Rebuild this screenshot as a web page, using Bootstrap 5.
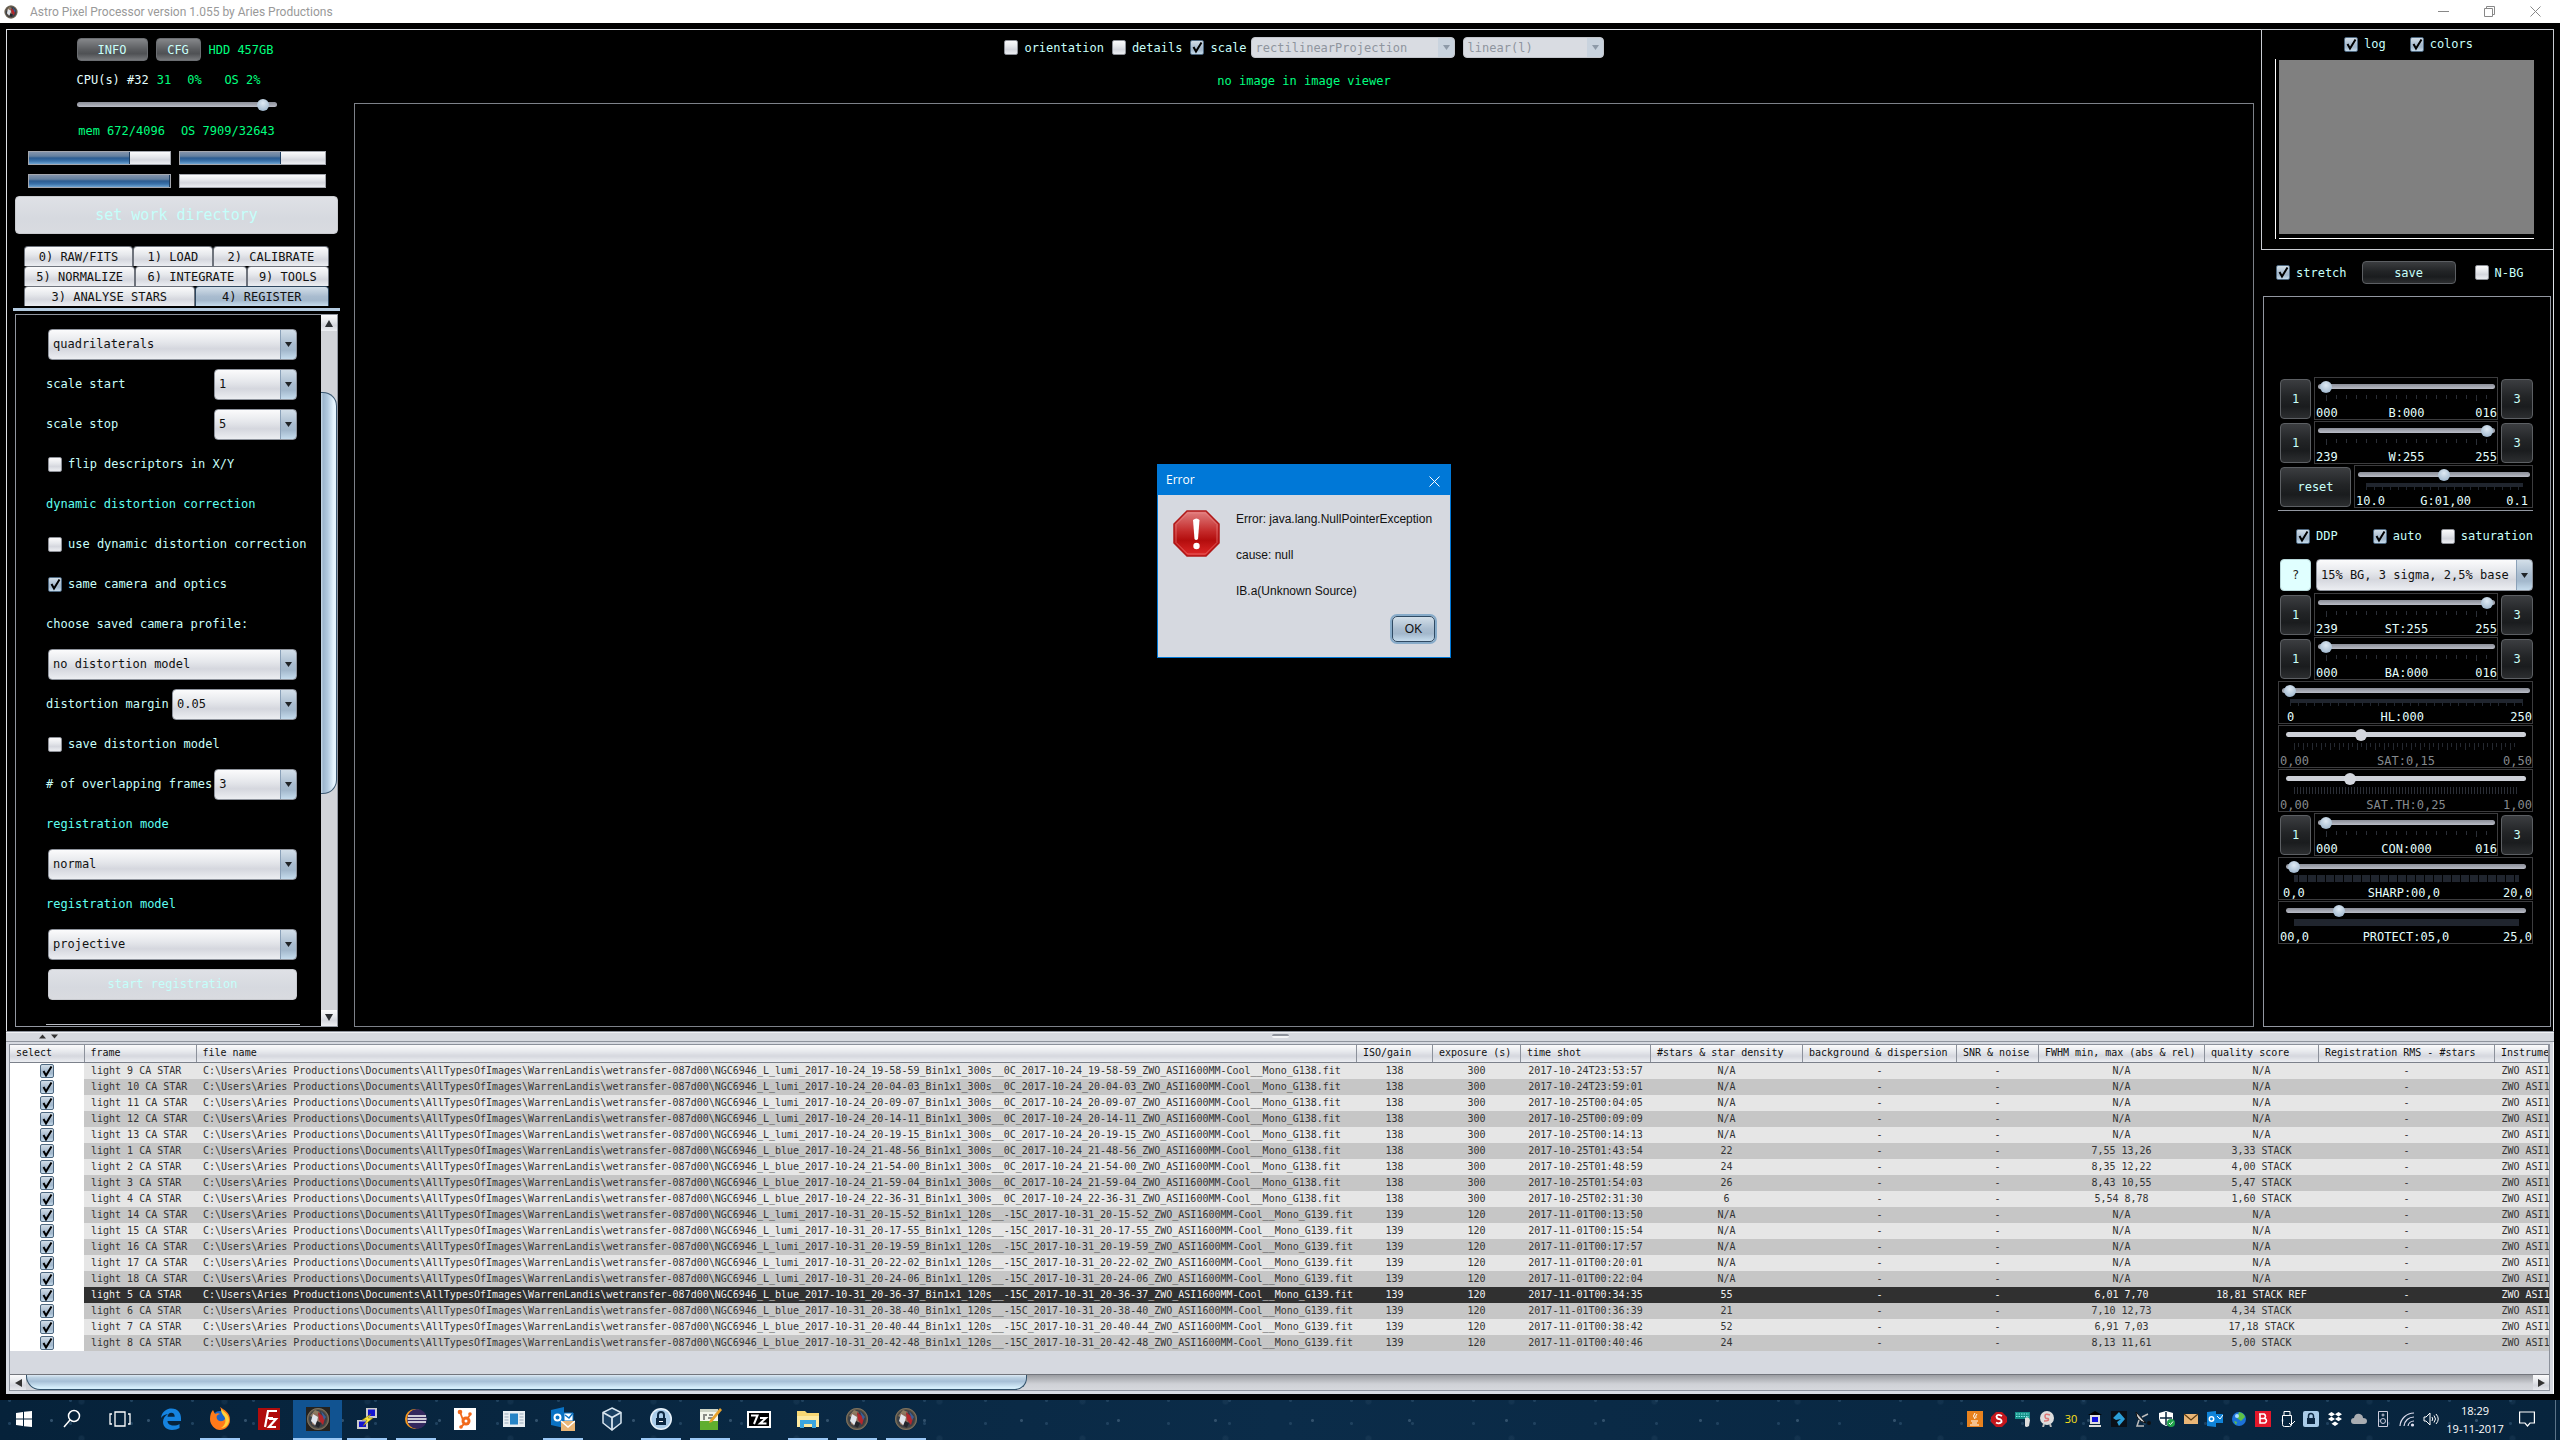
<!DOCTYPE html>
<html lang="en">
<head>
<meta charset="utf-8">
<meta name="viewport" content="width=device-width, initial-scale=1">
<title>Astro Pixel Processor</title>
<link rel="stylesheet" href="https://cdn.jsdelivr.net/npm/bootstrap@5.3.0/dist/css/bootstrap.min.css">
<style>
:root{
  --silver:linear-gradient(#fbfbfc,#e6e8ec 40%,#d5d7de 65%,#eceef2);
  --steel:linear-gradient(#d3dfe9,#a9bccf 50%,#a3b8cc 70%,#c6dced);
  --pale:#c8fffa;
  --line:#9297a1;
}
html,body{height:100%}
body{background:#000;color:var(--pale);font:12px/16px "DejaVu Sans Mono",monospace;overflow:hidden}
button,select,input{font:inherit}
.ui-font{font-family:"Open Sans","Noto Sans",sans-serif}
.green-t{color:#00ff7f}
.cyan-t{color:#5ffff0}

/* window title */
.titlebar{height:23px;background:#fff;color:#999;font-family:Roboto,"Noto Sans",sans-serif;padding-right:2px}
.titlebar .cap{width:46px;height:23px;border:0;background:none;padding:0;color:#999;display:flex;align-items:center;justify-content:center}

.frame-top{margin:6px 6px 0;border:1px solid #dfe1e6;border-bottom:0;min-height:0}
.col-left{width:339px;padding:8px 8px 4px;min-height:0;flex:none}
.col-mid{padding:7px 0 4px 8px;min-width:0}
.col-right{width:299px;padding-left:7px;flex:none}

/* nimbus buttons */
.nb{border:1px solid #5c5f63;border-radius:4px;background:linear-gradient(#3b3d40,#222426 45%,#1a1c1e 70%,#2c2e30);color:var(--pale);padding:0;text-align:center}
.nb-grey{background:linear-gradient(#85878a,#5b5d60 50%,#4f5154 70%,#77797c);border-color:#6b6e72;height:23px}
.nb-off{background:linear-gradient(#dfe1e6,#d6d9df 60%,#d9dbe0);border-color:#c9cbd0;color:#c5fffb}
.nb-q{background:#e0ffff;border-color:#b8d8da;color:#222}

.ck{display:flex;align-items:center;white-space:nowrap}
.ck input,.tick{appearance:none;width:14px;height:15px;margin:0 6px 0 0;flex:none;border:1px solid #8d9097;border-radius:2px;background:var(--silver)}
.ck input:checked,.tick:checked{border-color:#4e6880;background:url("data:image/svg+xml,%3Csvg xmlns='http://www.w3.org/2000/svg' viewBox='0 0 12 13'%3E%3Cpath d='M2.5 6L5 10.5 10.5 1.5' fill='none' stroke='%23000' stroke-width='2'/%3E%3C/svg%3E") center/12px 13px no-repeat,var(--steel)}

.cb{appearance:none;height:31px;border:1px solid #8e939c;border-radius:4px;color:#111;padding:0 20px 0 4px;min-width:0;
  background:url("data:image/svg+xml,%3Csvg xmlns='http://www.w3.org/2000/svg' viewBox='0 0 7 5'%3E%3Cpath d='M0 0h7L3.500 5z' fill='%23202428'/%3E%3C/svg%3E") right 4px center/7px 5px no-repeat,
  linear-gradient(#8ba1b8,#8ba1b8) right 15px top/1px 100% no-repeat,
  var(--steel) right top/15px 100% no-repeat,var(--silver)}
.cb:disabled{opacity:1;height:21px;color:#8f959e;border-color:#c3c6cc;
  background:url("data:image/svg+xml,%3Csvg xmlns='http://www.w3.org/2000/svg' viewBox='0 0 7 5'%3E%3Cpath d='M0 0h7L3.500 5z' fill='%238e9aa8'/%3E%3C/svg%3E") right 4px center/7px 5px no-repeat,
  linear-gradient(#c9d3de,#c9d3de) right top/16px 100% no-repeat,#d9dce2}

input[type=range]{appearance:none;display:block;height:16px;background:none;padding:0;margin:0}
input[type=range]::-webkit-slider-runnable-track{height:5px;border-radius:3px;background:linear-gradient(#8a8d97,#b9bcc6)}
input[type=range]::-webkit-slider-thumb{appearance:none;width:16px;height:16px;margin-top:-5px;border:2px solid transparent;border-radius:50%;background:radial-gradient(circle at 50% 35%,#dfeaf4,#a9bfd3 70%,#5c7893) padding-box}
input[type=range]:disabled::-webkit-slider-runnable-track{background:#cdd0d7}
input[type=range]:disabled::-webkit-slider-thumb{background:#d3d6dd padding-box}

.status{width:200px}
.meters{margin-top:11px}
.bars{width:298px;display:grid;grid-template-columns:143px 1fr;gap:9px 8px;margin-top:12px}
.bars .progress{height:14px;border-radius:0;border:1px solid #a5a8af;background:var(--silver)}
.bars .progress-bar{background:linear-gradient(#8394ac,#64809f 35%,#2c5c91 50%,#3a72aa 75%,#6fa5d3);border-right:1px solid #1d3c5e}
.workdir{height:38px;font-size:15px}

/* tabs */
.tabs{width:305px}
.tabs button{flex:1 1 auto;height:20px;border:1px solid #6e737c;border-bottom:0;border-radius:4px 4px 0 0;background:var(--silver);color:#111;padding:0}
.tabs button.on{background:var(--steel);border-color:#2e475f}
.tab-rule{height:3px;background:#b4cbe0;margin:2px -2px 3px}

.scroll-pane{border:1px solid var(--line);min-height:0}
.form-rows{padding:9px 0 0 30px;width:284px}
.fr{height:40px;display:flex;align-items:center;justify-content:space-between;white-space:nowrap}
.fr .cb,.fr .nb{margin:0 3px 0 2px}
.fr .ck{margin-left:2px}
.fr .wide{width:100%;height:31px}
.w-s{width:83px}
.w-m{width:125px}
.rule{height:1px;background:#b9bcc4;margin-top:20px}

.sb{background:#d2d4d9}
.sb button{border:0;background:var(--silver);padding:0;width:16px;height:16px;display:flex;align-items:center;justify-content:center;flex:none}
.sb-v{width:16px}
.sb-v .knob{background:linear-gradient(90deg,#c9dae8,#9db6cd 15%,#b3cbe0 45%,#e6f5ff 85%);border:1px solid #3b5871;border-left:0;border-radius:0 14px 14px 0}
.sb-h{height:16px;border-top:1px solid #73767d;background:linear-gradient(#9a9ca1,#cfd1d6 60%,#d6d8dd)}
.sb-h .knob{background:linear-gradient(#dce9f3,#b9cfe1 20%,#a6bfd6 45%,#d6eefb 90%);border:1px solid #33536c;border-top:0;border-radius:0 0 12px 14px}
.g61{flex:61}.g403{flex:403}.g217{flex:217}.g998{flex:998}.g1505{flex:1505}

.note{margin-top:15px}
.viewer{border:1px solid #7d8189;margin-top:14px;padding-bottom:7px}

/* error dialog */
.dlg{width:294px;border:1px solid #0078d7;background:#d6d9e0;color:#111;font:12px/18px "Liberation Sans",Arial,sans-serif}
.dlg-head{height:30px;background:#0078d7;color:#fff;padding:0 4px 0 8px}
.dlg-head button{border:0;background:none;padding:0 6px;color:#fff}
.dlg-body{padding:15px}
.dlg-body p{margin:0 0 18px}
.dlg-body p:last-child{margin-bottom:16px}
.ok{width:43px;height:26px;border:1px solid #2f4a63;border-radius:5px;background:var(--steel);box-shadow:0 0 0 2px #87abc9;color:#111;padding:0}

/* right column */
.hist{border:1px solid #c9ccd2;margin-top:-1px;margin-right:-1px;padding:6px 19px 10px 13px;height:221px}
.hist-opts{margin:0 0 7px 8px}
.plot{border-left:1px solid #fff;padding:1px 0 3px 3px;height:180px}
.plot div{background:#808080;height:174px}
.axis{height:1px;background:#fff;margin:-1px 0 0 4px}
.actions{margin-top:11px;padding-left:15px;gap:15px}
.side{border:1px solid var(--line);margin:12px 2px 4px 2px;padding:80px 17px 0 14px}
.grp{height:43px;margin-bottom:1px;display:flex;gap:3px}
.grp .nb{height:40px;margin-top:2px;width:31px;flex:none}
.grp .nb:first-child{margin-left:2px}
.grp .nb:last-child{width:32px}
.grp .reset{width:71px!important}
.sl{flex:1;min-width:0;border:1px solid #3c3c3e}
.sl .in{margin:0 2px 0 3px}
.sl.pad .in{margin:0 6px 0 7px}
.sl input{width:100%}
.sl .tk{height:7px;margin:1px 7px 5px 8px}
.sl .cap3{display:flex;justify-content:space-between;line-height:12px;padding:0 0 0 1px;color:#e4fffd}
.sl.off .cap3{color:#85898d}
.tk-a{background:linear-gradient(90deg,#2a2e36 1px,transparent 1px) 0 0/10px 4px repeat-x,linear-gradient(90deg,#2a2e36 1px,transparent 1px) 0 0/150px 6px repeat-x}
.tk-b{background:linear-gradient(#20252e,#20252e) 0 0/100% 4px no-repeat,linear-gradient(90deg,#20252e 1px,transparent 1px) 0 0/8px 7px repeat-x}
.tk-c{background:linear-gradient(90deg,#24282f 1px,transparent 1px) 0 0/9px 7px repeat-x,linear-gradient(90deg,#24282f 1px,transparent 1px) 4px 0/9px 4px repeat-x}
.tk-d{background:linear-gradient(90deg,#2a2e36 1px,transparent 1px) 0 0/3px 7px repeat-x}
.tk-e{background:linear-gradient(90deg,#20252e 8px,transparent 8px) 5px 0/9px 7px repeat-x}
.tk-f{background:#20252e}
.thin{height:1px;background:#9297a1;margin:2px 0 17px}
.ddp{margin-left:18px}
.sl-pre{height:32px;margin:15px 0 2px;display:flex;gap:5px}

/* frames table */
.split{margin:0 6px;height:11px;background:#d6d9df;border:1px solid #8f949d;border-width:1px 0;padding:0 53px 0 33px;box-shadow:inset 0 1px #f0f1f4}
.grip{width:17px;height:4px;border-top:2px solid #8e939c;border-radius:2px;background:#f4f5f7}
.frames{margin:0 6px 6px;background:#d6d9e0;border-right:1px solid #fff;padding:2px 3px 3px 3px}
.frames-in{border:1px solid #8c919b;overflow:hidden}
.frames table{table-layout:fixed;width:100%;border-collapse:collapse;font-size:10px;line-height:16px;color:#333}
.frames th{height:18px;padding:0 0 0 6px;font-weight:400;color:#111;background:var(--silver);border-right:1px solid #8c919b;border-bottom:1px solid #7c818b;white-space:nowrap;overflow:hidden}
.frames td{height:16px;padding:0;text-align:center;white-space:nowrap;overflow:hidden;background:#e6e6e6}
.frames tr:nth-child(even) td{background:#c6c6c6}
.frames tr.cur td{background:#303030;color:#f2f2f2}
.frames tr td:first-child{background:#fff!important}
.frames td.l{text-align:left;padding-left:7px}
.frames .tick{display:block;margin:0 auto;height:14px}
.frames .void{height:23px}

/* taskbar */
.task{height:40px;background:
  radial-gradient(circle,#31506b 1px,transparent 2px) 3px 5px/97px 31px,
  radial-gradient(circle,#1f415e 1px,transparent 2px) 40px 12px/61px 23px,
  radial-gradient(circle,#28486450 2px,transparent 4px) 10px 20px/143px 37px,
  linear-gradient(90deg,#06223a,#0b2c49 50%,#07243d);color:#fff}
.task button{border:0;background:none;padding:0;width:49px;height:40px;border-bottom:2px solid transparent;display:flex;align-items:center;justify-content:center;flex:none}
.task .first3{margin-right:2px}
.task .first3 button{width:48px}
.task .run{background:linear-gradient(#9bc8f5,#9bc8f5) center bottom/40px 2px no-repeat;background-origin:border-box;background-clip:border-box}
.task .act{background:linear-gradient(#9bc8f5,#9bc8f5) center bottom/100% 2px no-repeat border-box,#115391 border-box}
.task svg{width:24px;height:24px}
.tray button{width:24px!important}
.tray svg{width:16px;height:16px}
.clock{width:64px;font-size:11px;line-height:18px}
.edge{width:1px;background:#5b7388;margin:0 4px 0 12px}
</style>
</head>
<body class="d-flex flex-column">

<svg width="0" height="0" class="position-absolute" aria-hidden="true">
  <defs>
    <symbol id="app" viewBox="0 0 24 24"><circle cx="12" cy="12" r="11" fill="#5b5346"/><circle cx="12" cy="12" r="9" fill="#3a4048"/><path d="M4 9l5-6 5 2-6 6z" fill="#8d7b60"/><path d="M6 6l6 1 3 6-2 8-7-4z" fill="#8a6d5a"/><path d="M7 7l5 3-2 9-5-5z" fill="#e0e4ea"/><path d="M12 5l7 6-2 7-4-5z" fill="#b3262c"/><path d="M15 4l5 6-2 3z" fill="#3b5f99"/><path d="M11 14l4 2-2 5-4-2z" fill="#23262c"/><circle cx="12" cy="12" r="10.500" fill="none" stroke="#7d7362"/></symbol>
    <symbol id="up" viewBox="0 0 8 7"><path d="M4 0l4 7H0z" fill="#2c2f33"/></symbol>
  </defs>
</svg>

<header class="titlebar d-flex align-items-center">
  <svg class="mx-1" width="14" height="14"><use href="#app"/></svg>
  <span class="ms-2">Astro Pixel Processor version 1.055 by Aries Productions</span>
  <div class="d-flex ms-auto">
    <button class="cap" aria-label="Minimize"><svg width="11" height="11"><path d="M0 5.500h11" stroke="#888"/></svg></button>
    <button class="cap" aria-label="Restore"><svg width="11" height="11" fill="none" stroke="#888"><path d="M.5 2.500h8v8h-8zM2.500 2.500v-2h8v8h-2"/></svg></button>
    <button class="cap" aria-label="Close"><svg width="11" height="11"><path d="M.5.5l10 10M10.500.5l-10 10" stroke="#888"/></svg></button>
  </div>
</header>

<main class="frame-top d-flex flex-grow-1">
  <section class="col-left d-flex flex-column">
    <div class="status mx-auto d-flex align-items-center">
      <button class="nb nb-grey" style="width:71px">INFO</button>
      <button class="nb nb-grey ms-2" style="width:45px">CFG</button>
      <span class="green-t ms-2 text-nowrap">HDD 457GB</span>
    </div>
    <div class="status meters mx-auto d-flex text-nowrap green-t">
      <label for="cpu" class="me-2" style="color:#e4fffd">CPU(s) #32</label><span class="me-3">31</span><span>0%</span><span class="ms-auto me-3">OS 2%</span>
    </div>
    <input id="cpu" type="range" class="status mx-auto mt-2" value="97">
    <div class="status meters mx-auto d-flex justify-content-center gap-3 green-t text-nowrap"><span>mem 672/4096</span><span>OS 7909/32643</span></div>
    <div class="bars mx-auto">
      <div class="progress" role="progressbar" aria-label="Heap memory"><div class="progress-bar" style="width:72%"></div></div>
      <div class="progress" role="progressbar" aria-label="System memory"><div class="progress-bar" style="width:70%"></div></div>
      <div class="progress" role="progressbar" aria-label="Task"><div class="progress-bar" style="width:100%"></div></div>
      <div class="progress" role="progressbar" aria-label="Total"></div>
    </div>
    <button class="nb nb-off workdir mt-2 w-100">set work directory</button>
    <nav class="tabs mx-auto pt-2 mt-1">
      <div class="d-flex"><button>0) RAW/FITS</button><button>1) LOAD</button><button>2) CALIBRATE</button></div>
      <div class="d-flex"><button>5) NORMALIZE</button><button>6) INTEGRATE</button><button>9) TOOLS</button></div>
      <div class="d-flex"><button>3) ANALYSE STARS</button><button class="on">4) REGISTER</button></div>
    </nav>
    <div class="tab-rule"></div>
    <div class="scroll-pane d-flex flex-grow-1 overflow-hidden">
      <div class="form-rows">
        <div class="fr"><select class="cb wide" aria-label="descriptor"><option>quadrilaterals</option></select></div>
        <div class="fr"><label for="s1">scale start</label><select id="s1" class="cb w-s"><option>1</option></select></div>
        <div class="fr"><label for="s2">scale stop</label><select id="s2" class="cb w-s"><option>5</option></select></div>
        <div class="fr"><label class="ck"><input type="checkbox">flip descriptors in X/Y</label></div>
        <div class="fr cyan-t">dynamic distortion correction</div>
        <div class="fr"><label class="ck"><input type="checkbox">use dynamic distortion correction</label></div>
        <div class="fr"><label class="ck"><input type="checkbox" checked>same camera and optics</label></div>
        <div class="fr"><label for="prof">choose saved camera profile:</label></div>
        <div class="fr"><select id="prof" class="cb wide"><option>no distortion model</option></select></div>
        <div class="fr"><label for="marg">distortion margin</label><select id="marg" class="cb w-m"><option>0.05</option></select></div>
        <div class="fr"><label class="ck"><input type="checkbox">save distortion model</label></div>
        <div class="fr"><label for="ovl"># of overlapping frames</label><select id="ovl" class="cb w-s"><option>3</option></select></div>
        <div class="fr cyan-t"><label for="mode">registration mode</label></div>
        <div class="fr"><select id="mode" class="cb wide"><option>normal</option></select></div>
        <div class="fr cyan-t"><label for="model">registration model</label></div>
        <div class="fr"><select id="model" class="cb wide"><option>projective</option></select></div>
        <div class="fr"><button class="nb nb-off wide">start registration</button></div>
        <div class="rule"></div>
      </div>
      <div class="sb sb-v ms-auto d-flex flex-column">
        <button aria-label="Scroll up"><svg width="8" height="7"><use href="#up"/></svg></button>
        <div class="g61"></div><div class="knob g403"></div><div class="g217"></div>
        <button aria-label="Scroll down"><svg width="8" height="7" viewBox="0 0 8 7"><path d="M0 0h8L4 7z" fill="#2c2f33"/></svg></button>
      </div>
    </div>
  </section>

  <section class="col-mid d-flex flex-column flex-grow-1">
    <div class="d-flex justify-content-center align-items-center">
      <label class="ck me-1"><input type="checkbox">orientation</label>
      <label class="ck me-1 ms-1"><input type="checkbox">details</label>
      <label class="ck me-1 ms-1"><input type="checkbox" checked>scale</label>
      <select class="cb me-2" style="width:204px" disabled aria-label="projection"><option>rectilinearProjection</option></select>
      <select class="cb" style="width:141px" disabled aria-label="stretch curve"><option>linear(l)</option></select>
    </div>
    <div class="text-center green-t note">no image in image viewer</div>
    <div class="viewer flex-grow-1 d-flex align-items-center justify-content-center">
      <div class="dlg" role="dialog" aria-labelledby="dt">
        <div class="dlg-head d-flex align-items-center justify-content-between ui-font"><span id="dt">Error</span><button aria-label="Close dialog"><svg width="11" height="11"><path d="M.5.5l10 10M10.500.5l-10 10" stroke="#fff"/></svg></button></div>
        <div class="dlg-body">
          <div class="d-flex">
            <svg class="me-3 flex-shrink-0" width="47" height="47" viewBox="0 0 47 47"><defs><linearGradient id="rd" x2="0" y2="1"><stop offset="0" stop-color="#e08080"/><stop offset=".45" stop-color="#c42a2a"/><stop offset=".65" stop-color="#b30d0d"/><stop offset="1" stop-color="#e02828"/></linearGradient></defs><path d="M14 1h19l13 13v19L33 46H14L1 33V14z" fill="url(#rd)" stroke="#b01818" stroke-width="1.500"/><path d="M14.500 3h18L44 14.500v18L32.500 44h-18L3 32.500v-18z" fill="none" stroke="#e88" stroke-opacity=".6"/><path d="M20 10q3.500-3 6.500 0l-1.500 19q-2 2-3.500 0z" fill="#fff"/><circle cx="23.500" cy="36" r="3.200" fill="#fff"/></svg>
            <div><p>Error: java.lang.NullPointerException</p><p>cause: null</p><p>IB.a(Unknown Source)</p></div>
          </div>
          <div class="text-end"><button class="ok">OK</button></div>
        </div>
      </div>
    </div>
  </section>

  <aside class="col-right d-flex flex-column">
    <div class="hist">
      <div class="hist-opts d-flex justify-content-center"><label class="ck me-4"><input type="checkbox" checked>log</label><label class="ck"><input type="checkbox" checked>colors</label></div>
      <div class="plot"><div></div></div>
      <div class="axis"></div>
    </div>
    <div class="actions d-flex align-items-center">
      <label class="ck"><input type="checkbox" checked>stretch</label>
      <button class="nb" style="width:94px;height:23px">save</button>
      <label class="ck ms-1"><input type="checkbox">N-BG</label>
    </div>
    <div class="side flex-grow-1">
      <div class="grp"><button class="nb">1</button><div class="sl"><div class="in"><input id="rB" type="range" value="0"><div class="tk tk-a"></div></div><div class="cap3"><span>000</span><label for="rB">B:000</label><span>016</span></div></div><button class="nb">3</button></div>
      <div class="grp"><button class="nb">1</button><div class="sl"><div class="in"><input id="rW" type="range" value="100"><div class="tk tk-a"></div></div><div class="cap3"><span>239</span><label for="rW">W:255</label><span>255</span></div></div><button class="nb">3</button></div>
      <div class="grp"><button class="nb reset">reset</button><div class="sl"><div class="in"><input id="rG" type="range" value="50"><div class="tk tk-b"></div></div><div class="cap3 pe-1"><span>10.0</span><label for="rG">G:01,00</label><span>0.1</span></div></div></div>
      <div class="thin"></div>
      <div class="ddp d-flex justify-content-between"><label class="ck"><input type="checkbox" checked>DDP</label><label class="ck ms-3"><input type="checkbox" checked>auto</label><label class="ck"><input type="checkbox">saturation</label></div>
      <div class="sl-pre"><button class="nb nb-q flex-shrink-0" style="width:31px;margin-left:2px">?</button><select class="cb flex-fill h-100" aria-label="preset"><option>15% BG, 3 sigma, 2,5% base</option></select></div>
      <div class="grp"><button class="nb">1</button><div class="sl"><div class="in"><input id="rST" type="range" value="100"><div class="tk tk-a"></div></div><div class="cap3"><span>239</span><label for="rST">ST:255</label><span>255</span></div></div><button class="nb">3</button></div>
      <div class="grp"><button class="nb">1</button><div class="sl"><div class="in"><input id="rBA" type="range" value="0"><div class="tk tk-a"></div></div><div class="cap3"><span>000</span><label for="rBA">BA:000</label><span>016</span></div></div><button class="nb">3</button></div>
      <div class="grp"><div class="sl"><div class="in"><input id="rHL" type="range" value="0"><div class="tk tk-b"></div></div><div class="cap3 ps-2"><span>0</span><label for="rHL">HL:000</label><span>250</span></div></div></div>
      <div class="grp"><div class="sl pad off"><div class="in"><input id="rS" type="range" value="30" disabled><div class="tk tk-c"></div></div><div class="cap3"><span>0,00</span><label for="rS">SAT:0,15</label><span>0,50</span></div></div></div>
      <div class="grp"><div class="sl pad off"><div class="in"><input id="rT" type="range" value="25" disabled><div class="tk tk-d"></div></div><div class="cap3"><span>0,00</span><label for="rT">SAT.TH:0,25</label><span>1,00</span></div></div></div>
      <div class="grp"><button class="nb">1</button><div class="sl"><div class="in"><input id="rC" type="range" value="0"><div class="tk tk-a"></div></div><div class="cap3"><span>000</span><label for="rC">CON:000</label><span>016</span></div></div><button class="nb">3</button></div>
      <div class="grp"><div class="sl pad"><div class="in"><input id="rP" type="range" value="0"><div class="tk tk-e"></div></div><div class="cap3 ps-1"><span>0,0</span><label for="rP">SHARP:00,0</label><span>20,0</span></div></div></div>
      <div class="grp"><div class="sl pad"><div class="in"><input id="rR" type="range" value="20"><div class="tk tk-f"></div></div><div class="cap3"><span>00,0</span><label for="rR">PROTECT:05,0</label><span>25,0</span></div></div></div>
    </div>
  </aside>
</main>

<div class="split d-flex align-items-center">
  <svg width="20" height="5"><path d="M0 4.500h7L3.500.5zM12 .5h7l-3.500 4z" fill="#333"/></svg>
  <div class="grip mx-auto"></div>
</div>
<section class="frames">
  <div class="frames-in">
    <table>
      <colgroup><col style="width:74px"><col style="width:112px"><col><col style="width:76px"><col style="width:88px"><col style="width:130px"><col style="width:152px"><col style="width:154px"><col style="width:82px"><col style="width:166px"><col style="width:114px"><col style="width:176px"><col style="width:54px"></colgroup>
      <thead><tr><th>select</th><th>frame</th><th>file name</th><th>ISO/gain</th><th>exposure (s)</th><th>time shot</th><th>#stars &amp; star density</th><th>background &amp; dispersion</th><th>SNR &amp; noise</th><th>FWHM min, max (abs &amp; rel)</th><th>quality score</th><th>Registration RMS - #stars</th><th>Instrume</th></tr></thead>
      <tbody id="rows"></tbody>
    </table>
    <div class="void"></div>
    <div class="sb sb-h d-flex">
      <button aria-label="Scroll left"><svg width="7" height="8"><path d="M7 0v8L0 4z" fill="#333"/></svg></button>
      <div class="knob g998"></div><div class="g1505"></div>
      <button aria-label="Scroll right"><svg width="7" height="8"><path d="M0 0v8l7-4z" fill="#333"/></svg></button>
    </div>
  </div>
</section>

<footer class="task d-flex ui-font">
  <div class="first3 d-flex">
    <button aria-label="Start"><svg viewBox="0 0 24 24" fill="#fff"><path d="M4 6l7-1v6.500H4zM12 4.800L20 4v7.500h-8zM4 12.500h7V19l-7-1zM12 12.500h8V20l-8-.8z"/></svg></button>
    <button aria-label="Search"><svg viewBox="0 0 24 24" fill="none" stroke="#fff" stroke-width="1.500"><circle cx="14" cy="9" r="5.500"/><path d="M10 13l-6 7"/></svg></button>
    <button aria-label="Task view"><svg viewBox="0 0 24 24" fill="none" stroke="#fff" stroke-width="1.300"><path d="M7 5h10v14H7zM4 7H2v10h2M20 7h2v10h-2"/></svg></button>
  </div>
  <button aria-label="Edge"><svg viewBox="0 0 24 24"><path d="M2 11C3 4 8 1.500 12.500 1.500 19 1.500 22 6.500 22 11v3H8.500c0 3 3 4.500 6 4.500 2.500 0 4.500-.7 6-1.600V21c-2 1.200-4.500 2-7.500 2C7 23 4 19 4 15c0-3.500 2-6.500 5-8-3 .3-5.500 2-7 4zm6.500-1.300h7.200C15.700 7 14.500 5.700 12.300 5.700 10 5.700 8.800 7.500 8.500 9.700z" fill="#1583e0"/></svg></button>
  <button class="run" aria-label="Firefox"><svg viewBox="0 0 24 24"><circle cx="12" cy="12" r="8" fill="#1a64c8"/><path d="M12 0c4 3 10 5 10 13 0 6-5 10-10 10S2 18 2 12c0-4 1-7 3-9l2 4c2-1 4-1 5 0-3 1-4 2-3 5 2 3 6 3 8 0 1-4-3-7-5-12z" fill="#ff7a1a"/><path d="M13 2c3 3 8 5 8 11 0 5-4 8-8 8 5-3 6-9 2-13-1-2-2-3-2-6z" fill="#ffd13b"/></svg></button>
  <button aria-label="FileZilla"><svg viewBox="0 0 24 24"><path d="M1 1h22v22H1z" fill="#b00c0c"/><path d="M8 20L11 4h9M9 11h7M12 12h7l-7 8h7" fill="none" stroke="#fff" stroke-width="2.200"/></svg></button>
  <button class="act" aria-label="Astro Pixel Processor"><svg viewBox="0 0 24 24"><path d="M0 0h24v24H0z" fill="#24221f"/><use href="#app"/></svg></button>
  <button class="run" aria-label="PuTTY"><svg viewBox="0 0 24 24"><path d="M11 1h11v10H11zM2 13h11v9H2z" fill="#ccc"/><path d="M13 2.500h7v6.500h-7zM4 14.500h7v5.500H4z" fill="#1414d0"/><path d="M16 7L7 13h5l-4 6 10-8h-5z" fill="#ffe93b" stroke="#776400" stroke-width=".5"/></svg></button>
  <button class="run" aria-label="Eclipse"><svg viewBox="0 0 24 24"><circle cx="11" cy="12" r="10" fill="#f79a1e"/><circle cx="13" cy="12" r="10" fill="#34285e"/><path d="M4 9h18M3.500 12h19M4 15h18" stroke="#fff" stroke-width="1.400"/></svg></button>
  <button aria-label="Image tool"><svg viewBox="0 0 24 24"><path d="M1 1h22v22H1z" fill="#fff"/><circle cx="13" cy="14" r="4.500" fill="#f26a1b"/><circle cx="13" cy="14" r="1.500" fill="#fff"/><circle cx="7" cy="5" r="2.300" fill="#f26a1b"/><circle cx="17" cy="7" r="1.800" fill="#f26a1b"/><circle cx="8" cy="20" r="1.800" fill="#f26a1b"/><path d="M7 5l3 8M17 8l-3 4M8 20l4-4" stroke="#f26a1b" stroke-width="1.800"/></svg></button>
  <button aria-label="Console"><svg viewBox="0 0 24 24"><path d="M1 4h22v16H1z" fill="#e8eef2"/><path d="M8 6.500h8v11H8z" fill="#2684c6"/><path d="M2.500 7h4M2.500 10h4M2.500 13h4M2.500 16h4M17.500 7h4M17.500 10h4M17.500 13h4M17.500 16h4" stroke="#9ab"/></svg></button>
  <button class="run" aria-label="Outlook"><svg viewBox="0 0 24 24"><path d="M0 3l13-3v21L0 18z" fill="#0a72c4"/><path d="M13 6h9v8h-9z" fill="#fff" stroke="#0a72c4"/><path d="M14 8l4 3 4-5" fill="none" stroke="#0a72c4" stroke-width="1.500"/><circle cx="6.500" cy="10.500" r="3" fill="none" stroke="#fff" stroke-width="2"/><path d="M10 14h14v10H10z" fill="#eab676"/><path d="M10 14l7 6 7-6" fill="none" stroke="#fff" stroke-width="1.500"/></svg></button>
  <button aria-label="VirtualBox"><svg viewBox="0 0 24 24"><path d="M12 1l9 4.500V16l-9 7-9-7V5.500z" fill="#1b4163" stroke="#d9e6f0" stroke-width="1.500"/><path d="M3 5.500l9 5 9-5M12 10.500V23" fill="none" stroke="#d9e6f0" stroke-width="1.800"/></svg></button>
  <button class="run" aria-label="KeePass"><svg viewBox="0 0 24 24"><circle cx="12" cy="12" r="11" fill="#e9f2fa"/><circle cx="12" cy="12" r="9.500" fill="#a9cbe8"/><path d="M7 11h10v7H7z" fill="#0c2742"/><path d="M9 11V8a3 3 0 016 0v3" fill="none" stroke="#0c2742" stroke-width="2"/><path d="M10 14.500h4" stroke="#fff"/></svg></button>
  <button class="run" aria-label="Notepad++"><svg viewBox="0 0 24 24"><path d="M2 2h18v21H2z" fill="#f2f5ea"/><path d="M2 14h18v9H2z" fill="#5fae2e"/><path d="M2 2h18v3H2z" fill="#cdd3c4"/><path d="M5 8h4M11 8h4M6 9v4M10 11h5" stroke="#222"/><path d="M22 1L12 13l-1 3 3-1L24 3z" fill="#e8a22c"/></svg></button>
  <button aria-label="7-Zip"><svg viewBox="0 0 24 24"><path d="M0 4h24v17H0z" fill="#fff"/><path d="M2 6h20v13H2z" fill="#000"/><path d="M4 8.500h6.500L7 17M13 11h6l-6 5.500h6.500" fill="none" stroke="#fff" stroke-width="2"/></svg></button>
  <button class="run" aria-label="Explorer"><svg viewBox="0 0 24 24"><path d="M1 4h8l2 2h12v14H1z" fill="#f7d774"/><path d="M1 9h22v11H1z" fill="#fde9a0"/><path d="M4 13h16v8h-4v-4H8v4H4z" fill="#3aa5e0"/></svg></button>
  <button class="run" aria-label="APP window 2"><svg><use href="#app"/></svg></button>
  <button class="run" aria-label="APP window 3"><svg><use href="#app"/></svg></button>

  <div class="tray d-flex ms-auto">
    <button aria-label="Java"><svg viewBox="0 0 16 16"><path d="M0 0h16v16H0z" fill="#e8821e"/><path d="M8 2q-3 3 0 6M10 3q-2 2-1 4M4 10h7M5 12h5M3 14h9" stroke="#fff" fill="none"/></svg></button>
    <button aria-label="S tool"><svg viewBox="0 0 16 16"><path d="M5 1h6l5 5v5l-5 5H5l-5-5V6z" fill="#c4161c"/><path d="M11 5Q6 2.500 5.500 5.500 6 8 8 8q3 .5 2.500 3Q8 13.500 5 11.500" fill="none" stroke="#fff" stroke-width="1.800"/></svg></button>
    <button aria-label="Keyboard"><svg viewBox="0 0 16 16"><path d="M0 1h15v7H0z" fill="#168f87"/><path d="M1 3h13M1 5.500h13" stroke="#8ee" stroke-dasharray="1.500 1"/><path d="M10 7q4-2 5 2l-1 6q-3 2-4 0z" fill="#ddd"/></svg></button>
    <button aria-label="Sync"><svg viewBox="0 0 16 16"><circle cx="8" cy="7" r="7" fill="#ddd"/><path d="M5 13l-1 3M11 13l1 3" stroke="#bbb" stroke-width="2"/><path d="M11 4Q6 2 6 5t3 2.500Q11 10 5 10" fill="none" stroke="#d77" stroke-width="1.600"/></svg></button>
    <button aria-label="Temperature" style="color:#ffe21a;font-size:11px">30</button>
    <button aria-label="Network PC"><svg viewBox="0 0 16 16"><path d="M2 14h12v2H2zM3 4h10v9H3z" fill="#ddd"/><path d="M5 6h6v5H5z" fill="#11d"/><path d="M1 4l7-4 7 4z" fill="#000"/></svg></button>
    <button aria-label="Swift"><svg viewBox="0 0 16 16"><path d="M0 0h16v16H0z" fill="#0a1018"/><path d="M8 1l6 7-6 7-2-4 4-3-5 1-3-2z" fill="#2b9fd8"/></svg></button>
    <button aria-label="Satellite"><svg viewBox="0 0 16 16"><path d="M1 1q0 9 10 11z" fill="#ccc" stroke="#111"/><path d="M4 9l-2 6h7M7 6l6-3" stroke="#bbb" fill="none" stroke-width="1.500"/><circle cx="14" cy="12" r="2" fill="#111"/></svg></button>
    <button aria-label="Defender"><svg viewBox="0 0 16 16"><path d="M7 0l7 2v5q0 5-7 8Q0 12 0 7V2z" fill="#fff"/><path d="M7 1v13M1 7h12" stroke="#0a2740" stroke-width="1.500"/><circle cx="12" cy="12" r="4" fill="#1fa34a"/><path d="M10 12l1.500 1.500L14 10.500" stroke="#fff" fill="none"/></svg></button>
    <button aria-label="Mail"><svg viewBox="0 0 16 16"><path d="M1 3h14v10H1z" fill="#eab676"/><path d="M1 3l7 6 7-6" fill="none" stroke="#5d3c10" stroke-width="1.200"/></svg></button>
    <button aria-label="Outlook tray"><svg viewBox="0 0 16 16"><path d="M0 1l9-1v16l-9-1z" fill="#0f83d8"/><path d="M9 3h7v9H9z" fill="#0f83d8"/><path d="M10 5l3 3 3-4" stroke="#fff" fill="none"/><circle cx="4.500" cy="8" r="2.200" stroke="#fff" fill="none" stroke-width="1.500"/></svg></button>
    <button aria-label="Globe"><svg viewBox="0 0 16 16"><circle cx="8" cy="8" r="7" fill="#1c72d8"/><path d="M8 1q5 1 6 5l-4 4-4-3zM3 10l3 1-1 3z" fill="#5fc246"/><circle cx="6" cy="5" r="2" fill="#a9dcff"/></svg></button>
    <button aria-label="Bitdefender"><svg viewBox="0 0 16 16"><path d="M0 0h16v16H0z" fill="#e3172a"/><path d="M5 3v9h5q3-2.500 0-4.500H5h4q3-2.500 0-4.500H4" fill="none" stroke="#fff" stroke-width="1.600"/></svg></button>
    <button aria-label="USB"><svg viewBox="0 0 16 16" fill="none" stroke="#fff"><path d="M5 4V.5h6V4M3.500 4.500h9v9q0 2-2 2h-5q-2 0-2-2zM10 12l2 2 4-4"/></svg></button>
    <button aria-label="Lock"><svg viewBox="0 0 16 16"><rect width="16" height="16" rx="2" fill="#a9cbe8"/><path d="M4 7h8v6H4z" fill="#0c2742"/><path d="M5.500 7V5a2.500 2.500 0 015 0v2" fill="none" stroke="#0c2742" stroke-width="1.500"/></svg></button>
    <button aria-label="Dropbox"><svg viewBox="0 0 16 16" fill="#fff"><path d="M4.500 1L8 3.200 4.500 5.400 1 3.200zM11.500 1L15 3.200l-3.500 2.200L8 3.200zM4.500 5.800L8 8l-3.500 2.200L1 8zM11.500 5.800L15 8l-3.500 2.200L8 8zM8 10.500l3.500 2.200L8 15l-3.500-2.300z"/></svg></button>
    <button aria-label="OneDrive"><svg viewBox="0 0 16 16"><path d="M3 13a3 3 0 010-6q1-5 6-4 3 1 3 4 4 0 4 3t-3 3z" fill="#a9adb2"/></svg></button>
    <button aria-label="Speaker box"><svg viewBox="0 0 16 16" fill="none" stroke="#ccd"><path d="M3.500.5h9v15h-9z"/><circle cx="8" cy="10" r="2.500"/><circle cx="8" cy="4" r="1"/></svg></button>
    <button aria-label="Wi-Fi"><svg viewBox="0 0 16 16" fill="none" stroke="#dde" stroke-width="1.200"><path d="M1 15A14 14 0 0115 2M5 15A10 10 0 0115 6M9 15a6 6 0 016-5"/><circle cx="13.500" cy="14" r="1" fill="#fff"/></svg></button>
    <button aria-label="Volume"><svg viewBox="0 0 16 16" fill="none" stroke="#fff"><path d="M1 6h2l4-4v12l-4-4H1zM9 6q1.500 2 0 4M11 4.500q3 3.500 0 7M13 3q4.500 5 0 10"/></svg></button>
    <div class="clock text-center d-flex flex-column justify-content-center"><span>18:29</span><span>19-11-2017</span></div>
    <button aria-label="Notifications" class="ms-2 me-1"><svg viewBox="0 0 16 16" fill="none" stroke="#fff" stroke-width="1.200"><path d="M.6 1h14.800v11H11l-2.500 3L6 12H.6z"/></svg></button>
    <span class="edge"></span>
  </div>
</footer>

<script src="https://cdn.jsdelivr.net/npm/bootstrap@5.3.0/dist/js/bootstrap.bundle.min.js"></script>
<script>
// number, filter, local time in file name, time shot, stars, fwhm, quality
const night1 = [
  [9,'lumi','19-58-59','24T23:53:57','N/A','N/A','N/A'],
  [10,'lumi','20-04-03','24T23:59:01','N/A','N/A','N/A'],
  [11,'lumi','20-09-07','25T00:04:05','N/A','N/A','N/A'],
  [12,'lumi','20-14-11','25T00:09:09','N/A','N/A','N/A'],
  [13,'lumi','20-19-15','25T00:14:13','N/A','N/A','N/A'],
  [1,'blue','21-48-56','25T01:43:54','22','7,55 13,26','3,33 STACK'],
  [2,'blue','21-54-00','25T01:48:59','24','8,35 12,22','4,00 STACK'],
  [3,'blue','21-59-04','25T01:54:03','26','8,43 10,55','5,47 STACK'],
  [4,'blue','22-36-31','25T02:31:30','6','5,54 8,78','1,60 STACK']];
const night2 = [
  [14,'lumi','20-15-52','01T00:13:50','N/A','N/A','N/A'],
  [15,'lumi','20-17-55','01T00:15:54','N/A','N/A','N/A'],
  [16,'lumi','20-19-59','01T00:17:57','N/A','N/A','N/A'],
  [17,'lumi','20-22-02','01T00:20:01','N/A','N/A','N/A'],
  [18,'lumi','20-24-06','01T00:22:04','N/A','N/A','N/A'],
  [5,'blue','20-36-37','01T00:34:35','55','6,01 7,70','18,81 STACK REF'],
  [6,'blue','20-38-40','01T00:36:39','21','7,10 12,73','4,34 STACK'],
  [7,'blue','20-40-44','01T00:38:42','52','6,91 7,03','17,18 STACK'],
  [8,'blue','20-42-48','01T00:40:46','24','8,13 11,61','5,00 STACK']];
const dir = 'C:\\Users\\Aries Productions\\Documents\\AllTypesOfImages\\WarrenLandis\\wetransfer-087d00\\NGC6946_L_';
function row(r, n){
  const day = n === 1 ? '2017-10-24' : '2017-10-31', month = n === 1 ? '2017-10-' : '2017-11-';
  const exp = n === 1 ? 300 : 120, temp = n === 1 ? '0C' : '-15C', gain = n === 1 ? 138 : 139;
  const file = `${dir}${r[1]}_${day}_${r[2]}_Bin1x1_${exp}s__${temp}_${day}_${r[2]}_ZWO_ASI1600MM-Cool__Mono_G${gain}.fit`;
  const mid = [gain, exp, month + r[3], r[4], '-', '-', r[5], r[6], '-'].map(v => `<td>${v}</td>`).join('');
  return `<tr${r[0] === 5 ? ' class="cur"' : ''}><td><input type="checkbox" class="tick" checked aria-label="select light ${r[0]}"></td><td class="l">light ${r[0]} CA STAR</td><td class="l">${file}</td>${mid}<td class="l">ZWO ASI1</td></tr>`;
}
document.getElementById('rows').innerHTML = night1.map(r => row(r, 1)).join('') + night2.map(r => row(r, 2)).join('');
</script>
</body>
</html>
